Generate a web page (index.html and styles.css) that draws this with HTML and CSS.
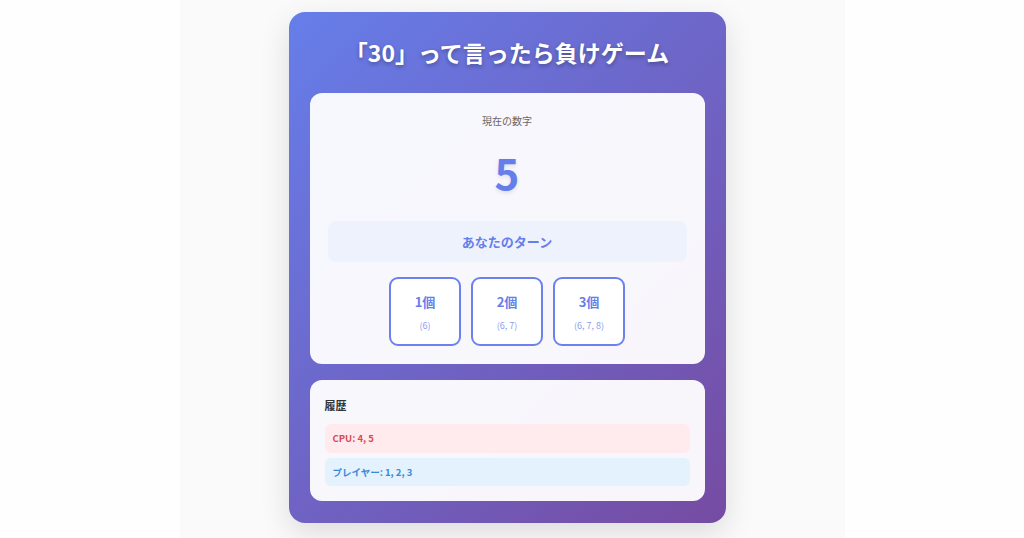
FILE: index.html
```html
<!DOCTYPE html>
<html lang="ja">
<head>
<meta charset="utf-8">
<title>「30」って言ったら負けゲーム</title>
<link rel="stylesheet" href="styles.css">
</head>
<body>
<div class="stage">
  <main class="game">
    <h1 class="title">「30」って言ったら負けゲーム</h1>

    <section class="panel board">
      <div class="label">現在の数字</div>
      <div class="current">5</div>
      <div class="turn">あなたのターン</div>
      <div class="choices">
        <button class="choice"><span class="count">1個</span><span class="nums">(6)</span></button>
        <button class="choice"><span class="count">2個</span><span class="nums">(6, 7)</span></button>
        <button class="choice"><span class="count">3個</span><span class="nums">(6, 7, 8)</span></button>
      </div>
    </section>

    <section class="panel history">
      <h2 class="history-title">履歴</h2>
      <div class="entry cpu">CPU: 4, 5</div>
      <div class="entry player">プレイヤー: 1, 2, 3</div>
    </section>
  </main>
</div>
</body>
</html>
```

FILE: styles.css
```css
* {
  box-sizing: border-box;
}

html, body {
  margin: 0;
  height: 100%;
}

body {
  background: #fefefe;
  font-family: "Noto Sans CJK JP", "Noto Sans", sans-serif;
}

.stage {
  width: 665px;
  height: 100%;
  margin: 0 auto;
  background: #fafafa;
  padding: 12px 0 0 109px;
  display: flex;
  align-items: flex-start;
}

.game {
  width: 437px;
  height: 511px;
  border-radius: 16px;
  background: linear-gradient(135deg, #667eea 0%, #764ba2 100%);
  box-shadow: 0 10px 30px rgba(0, 0, 0, 0.12);
  padding: 22px 21px 22px;
  display: flex;
  flex-direction: column;
  gap: 16px;
}

.title {
  margin: 0 0 7px;
  color: #fff;
  font-size: 23px;
  line-height: 36px;
  font-weight: 700;
  text-align: center;
  text-shadow: 0 2px 4px rgba(0, 0, 0, 0.3);
}

.panel {
  background: rgba(255, 255, 255, 0.95);
  border-radius: 12px;
}

.board {
  height: 271px;
  padding: 20px 18px 18px;
  display: flex;
  flex-direction: column;
  align-items: center;
}

.label {
  font-size: 10px;
  line-height: 15px;
  color: #666;
}

.current {
  margin-top: 19px;
  font-size: 42px;
  line-height: 50px;
  font-weight: 700;
  color: #667eea;
  text-shadow: 0 2px 4px rgba(0, 0, 0, 0.1);
}

.turn {
  margin-top: 24px;
  align-self: stretch;
  height: 41px;
  border-radius: 8px;
  background: #eef2fd;
  color: #667eea;
  font-size: 13px;
  font-weight: 700;
  display: flex;
  align-items: center;
  justify-content: center;
}

.choices {
  margin-top: 15px;
  display: flex;
  gap: 10px;
}

.choice {
  width: 72px;
  height: 69px;
  border: 2px solid #6b82ee;
  border-radius: 9px;
  background: #fff;
  font-family: inherit;
  display: flex;
  flex-direction: column;
  align-items: center;
  padding: 13px 0 0;
  cursor: pointer;
}

.count {
  font-size: 13px;
  line-height: 20px;
  font-weight: 700;
  color: #667eea;
}

.nums {
  margin-top: 7px;
  font-size: 9px;
  line-height: 14px;
  color: #8c9cef;
}

.history {
  height: 121px;
  padding: 15px;
  display: flex;
  flex-direction: column;
  gap: 5px;
}

.history-title {
  margin: 2px 0 6px;
  font-size: 11px;
  line-height: 16px;
  font-weight: 700;
  color: #333;
}

.entry {
  height: 29px;
  border-radius: 6px;
  padding: 0 8px;
  font-size: 9.5px;
  font-weight: 700;
  display: flex;
  align-items: center;
}

.cpu {
  background: #ffebee;
  color: #d84a54;
}

.player {
  background: #e3f2fd;
  color: #3a88d8;
}
```
